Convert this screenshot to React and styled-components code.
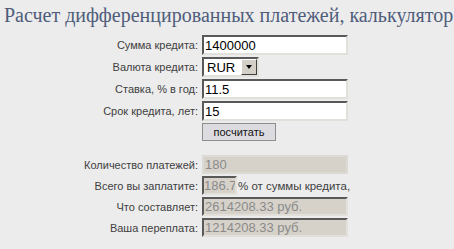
import React from "react";
import styled, { createGlobalStyle, css } from "styled-components";

const Global = createGlobalStyle`
  html, body { margin: 0; padding: 0; background: #ececec; }
  body { width: 454px; height: 249px; overflow: hidden; }
`;

const Page = styled.div`
  padding: 3px 0 0 4px;
  font-family: "Liberation Sans", Arial, sans-serif;
`;

const Title = styled.h1`
  margin: 0;
  font-family: "Liberation Serif", "Times New Roman", serif;
  font-weight: normal;
  font-size: 20px;
  line-height: 24px;
  color: #4f5d7b;
  white-space: nowrap;
`;

const Form = styled.div`
  display: grid;
  grid-template-columns: 194px auto;
  column-gap: 4px;
  row-gap: ${(p) => p.$gap}px;
  align-items: center;
  margin-top: ${(p) => p.$top}px;
`;

const Label = styled.label`
  text-align: right;
  font-size: 11px;
  color: #404040;
  white-space: nowrap;
`;

const Cell = styled.div`
  display: flex;
  align-items: center;
`;

const inset = css`
  box-sizing: border-box;
  border-style: solid;
  border-width: 2px;
  border-color: #595959 #e2e0da #e2e0da #595959;
`;

const Field = styled.input`
  ${inset}
  width: ${(p) => p.$w || 146}px;
  height: ${(p) => p.$h || 20}px;
  margin: 0;
  padding: ${(p) => (p.$tight ? "0" : "0 1px")};
  font-family: "Liberation Sans", Arial, sans-serif;
  font-size: 13px;
  color: ${(p) => (p.readOnly ? "#8a8a8a" : "#000")};
  background: ${(p) => (p.readOnly ? "#d6d2ca" : "#fff")};
  outline: none;
  ${(p) =>
    p.$flat &&
    css`
      border-color: #dcdad4;
    `}
`;

const SelectBox = styled.div`
  ${inset}
  width: 57px;
  height: 20px;
  display: flex;
  align-items: center;
  justify-content: space-between;
  background: #fff;
  padding-left: 3px;
  font-size: 13px;
  color: #000;
`;

const DropButton = styled.span`
  box-sizing: border-box;
  width: 16px;
  height: 16px;
  background: #d4d0c8;
  border-style: solid;
  border-width: 1px;
  border-color: #fff #404040 #404040 #fff;
  display: flex;
  align-items: center;
  justify-content: center;
`;

const Arrow = styled.span`
  width: 0;
  height: 0;
  border-left: 3.5px solid transparent;
  border-right: 3.5px solid transparent;
  border-top: 4px solid #000;
`;

const Button = styled.button`
  box-sizing: border-box;
  width: 74px;
  height: 18px;
  margin: 0;
  padding: 0;
  font-family: "Liberation Sans", Arial, sans-serif;
  font-size: 11px;
  color: #111;
  background: #dcdbe0;
  border: 1px solid #8e8e8e;
`;

const After = styled.span`
  font-size: 11.5px;
  color: #404040;
  margin-left: 1px;
  white-space: nowrap;
`;

export default function App() {
  return (
    <>
      <Global />
      <Page>
        <Title>Расчет дифференцированных платежей, калькулятор</Title>
        <Form $gap={2} $top={8}>
          <Label>Сумма кредита:</Label>
          <Cell>
            <Field defaultValue="1400000" />
          </Cell>
          <Label>Валюта кредита:</Label>
          <Cell>
            <SelectBox>
              RUR
              <DropButton>
                <Arrow />
              </DropButton>
            </SelectBox>
          </Cell>
          <Label>Ставка, % в год:</Label>
          <Cell>
            <Field defaultValue="11.5" />
          </Cell>
          <Label>Срок кредита, лет:</Label>
          <Cell>
            <Field defaultValue="15" />
          </Cell>
          <span />
          <Cell>
            <Button>посчитать</Button>
          </Cell>
        </Form>
        <Form $gap={2} $top={14}>
          <Label>Количество платежей:</Label>
          <Cell>
            <Field readOnly $flat $h={19} value="180" />
          </Cell>
          <Label>Всего вы заплатите:</Label>
          <Cell>
            <Field readOnly $tight $h={19} $w={35} value="186.7" />
            <After>% от суммы кредита,</After>
          </Cell>
          <Label>Что составляет:</Label>
          <Cell>
            <Field readOnly $h={19} value="2614208.33 руб." />
          </Cell>
          <Label>Ваша переплата:</Label>
          <Cell>
            <Field readOnly $h={19} value="1214208.33 руб." />
          </Cell>
        </Form>
      </Page>
    </>
  );
}
